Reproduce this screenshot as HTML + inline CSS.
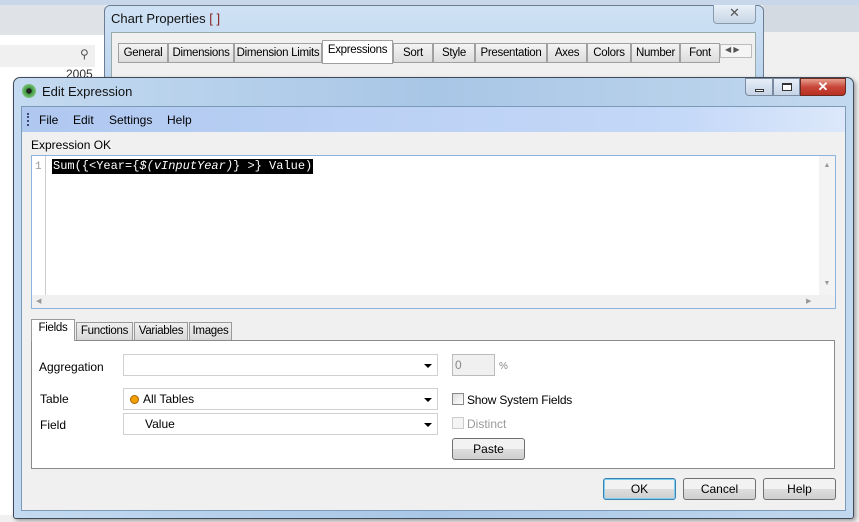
<!DOCTYPE html>
<html><head><style>
*{box-sizing:border-box;margin:0;padding:0}
body{width:859px;height:522px;overflow:hidden;position:relative;background:#f0f0f0;font-family:"Liberation Sans",sans-serif;font-size:12px;color:#000}
.a{position:absolute}
.tab{position:absolute;top:43px;height:20px;border:1px solid #a0a0a0;background:linear-gradient(#f4f4f4,#dcdcdc);font-size:11.5px;letter-spacing:-0.3px;padding:3px 0;text-align:center;white-space:nowrap;overflow:hidden}
.combo{position:absolute;left:123px;width:315px;height:22px;border:1px solid #d0d0d0;background:#fff;padding:3px 6px}
.combo:after{content:"";position:absolute;right:5px;top:9px;border-left:4px solid transparent;border-right:4px solid transparent;border-top:4px solid #000}
.btn{position:absolute;top:478px;width:73px;height:22px;border:1px solid #707070;border-radius:3px;background:linear-gradient(#f2f2f2 50%,#dddddd 50%,#cfcfcf);text-align:center;line-height:20px}
.itab{position:absolute;top:322px;height:19px;border:1px solid #9a9a9a;background:linear-gradient(#f0f0f0,#d8d8d8);padding:2px 0;text-align:center;font-size:11.5px;letter-spacing:-0.3px}
</style></head><body>
<div class="a" style="left:0;top:0;width:859px;height:5px;background:#c8d8ea"></div>
<div class="a" style="left:0;top:5px;width:105px;height:30px;background:#dfe3e8"></div>
<div class="a" style="left:0;top:35px;width:105px;height:480px;background:#fff"></div>
<div class="a" style="left:0;top:45px;width:95px;height:22px;background:#f0f0f0"></div>
<div class="a" style="left:80px;top:47px;font-size:12px;color:#555">⚲</div>
<div class="a" style="left:66px;top:67px;color:#333">2005</div>
<div class="a" style="left:763px;top:5px;width:96px;height:27px;background:#d3dae2"></div>
<div class="a" style="left:763px;top:32px;width:96px;height:490px;background:#f0f0f0"></div>
<div class="a" style="left:104px;top:5px;width:660px;height:80px;border:1px solid #6e7e90;border-radius:6px 6px 0 0;background:linear-gradient(#cfe2f5,#bcd4ee)"></div>
<div class="a" style="left:111px;top:11px;font-size:13px;color:#111">Chart Properties <span style="color:#8a1a1a">[ ]</span></div>
<div class="a" style="left:713px;top:5px;width:43px;height:19px;border:1px solid #8a9aae;border-top:none;border-radius:0 0 4px 4px;background:linear-gradient(#e8f0f8,#c8d6e6);text-align:center;color:#555;font-size:13px">✕</div>
<div class="a" style="left:111px;top:32px;width:645px;height:50px;background:#f0f0f0;border:1px solid #9aa"></div>
<div class="tab" style="left:118px;width:50px">General</div>
<div class="tab" style="left:168px;width:66px">Dimensions</div>
<div class="tab" style="left:234px;width:88px">Dimension Limits</div>
<div class="tab" style="left:322px;top:40px;height:24px;width:71px;background:#fff">Expressions</div>
<div class="tab" style="left:393px;width:40px">Sort</div>
<div class="tab" style="left:433px;width:42px">Style</div>
<div class="tab" style="left:475px;width:72px">Presentation</div>
<div class="tab" style="left:547px;width:40px">Axes</div>
<div class="tab" style="left:587px;width:44px">Colors</div>
<div class="tab" style="left:631px;width:49px">Number</div>
<div class="tab" style="left:680px;width:40px">Font</div>
<div class="a" style="left:720px;top:44px;width:32px;height:14px;border:1px solid #bbb;background:#f5f5f5;font-size:8px;color:#555;padding-left:4px">◀ ▶</div>
<div class="a" style="left:13px;top:77px;width:841px;height:442px;border:1px solid #404a58;border-radius:7px 7px 3px 3px;background:linear-gradient(90deg,#c4daf0,#a8c6e6 50%,#c2d8ee);box-shadow:2px 2px 4px rgba(0,0,0,.35)"></div>
<div class="a" style="left:22px;top:84px;width:14px;height:14px;border-radius:50%;background:radial-gradient(circle,#222 25%,#3c9a3c 30%,#7cc07c 70%,#999 75%)"></div>
<div class="a" style="left:42px;top:84px;font-size:13px;color:#111">Edit Expression</div>
<div class="a" style="left:745px;top:78px;width:28px;height:18px;border:1px solid #7a8aa0;border-radius:0 0 0 4px;background:linear-gradient(#e6eef8,#c6d4e6)"><div class="a" style="left:9px;top:10px;width:9px;height:3px;border:1px solid #333;background:#fff"></div></div>
<div class="a" style="left:773px;top:78px;width:27px;height:18px;border:1px solid #7a8aa0;background:linear-gradient(#e6eef8,#c6d4e6)"><div class="a" style="left:8px;top:4px;width:10px;height:8px;border:1px solid #333;border-top-width:2px;background:#fff"></div></div>
<div class="a" style="left:800px;top:78px;width:46px;height:18px;border:1px solid #6a2a20;border-radius:0 0 4px 0;background:linear-gradient(#e8a090,#c8463a 50%,#b83020);color:#fff;text-align:center;font-weight:bold;font-size:13px;line-height:16px">✕</div>
<div class="a" style="left:21px;top:106px;width:825px;height:405px;background:#f0f0f0;border:1px solid #7a9ab8"></div>
<div class="a" style="left:22px;top:107px;width:823px;height:25px;background:linear-gradient(90deg,#b0c8f0,#c4d8f8 80%,#dce8fa)"></div>
<div class="a" style="left:27px;top:113px;width:2px;height:13px;border-left:2px dotted #3a4a70"></div>
<div class="a" style="left:39px;top:113px">File</div>
<div class="a" style="left:73px;top:113px">Edit</div>
<div class="a" style="left:109px;top:113px">Settings</div>
<div class="a" style="left:167px;top:113px">Help</div>
<div class="a" style="left:31px;top:138px">Expression OK</div>
<div class="a" style="left:31px;top:155px;width:805px;height:154px;border:1px solid #8cb4dc;background:#fff"></div>
<div class="a" style="left:32px;top:156px;width:14px;height:139px;background:#fff;border-right:1px solid #ccc"></div>
<div class="a" style="left:35px;top:161px;font-size:11px;color:#999;font-family:'Liberation Mono',monospace">1</div>
<div class="a" style="left:52px;top:159px;height:15px;background:#000;color:#fff;font-family:'Liberation Mono',monospace;font-size:12px;line-height:15px;padding:0 1px;white-space:pre">Sum({&lt;Year={<i>$(vInputYear)</i>} &gt;} Value)</div>
<div class="a" style="left:819px;top:156px;width:16px;height:139px;background:#f3f3f3;color:#999;font-size:7px;text-align:center;padding-top:6px">▲<div style="position:absolute;top:124px;width:16px">▼</div></div>
<div class="a" style="left:32px;top:295px;width:803px;height:13px;background:#f0f0f0;color:#999;font-size:7px;padding:2px 4px">◀<span style="position:absolute;left:774px">▶</span></div>
<div class="itab" style="left:31px;top:319px;height:22px;width:44px;background:#fff;border-bottom:none;z-index:2">Fields</div>
<div class="itab" style="left:76px;width:57px">Functions</div>
<div class="itab" style="left:134px;width:54px">Variables</div>
<div class="itab" style="left:189px;width:43px">Images</div>
<div class="a" style="left:31px;top:340px;width:804px;height:129px;border:1px solid #8a8a8a;background:#fff"></div>
<div class="a" style="left:39px;top:360px">Aggregation</div>
<div class="a" style="left:40px;top:392px">Table</div>
<div class="a" style="left:40px;top:418px">Field</div>
<div class="combo" style="top:354px"></div>
<div class="combo" style="top:388px"><span style="display:inline-block;width:9px;height:9px;border-radius:50%;background:#f0a000;border:1px solid #b06000;margin-right:4px;vertical-align:-1px"></span>All Tables</div>
<div class="combo" style="top:413px;padding-left:21px">Value</div>
<div class="a" style="left:452px;top:354px;width:43px;height:22px;border:1px solid #bbb;background:#f0f0f0;color:#888;padding:3px 2px">0</div>
<div class="a" style="left:499px;top:361px;font-size:10px;color:#888">%</div>
<div class="a" style="left:452px;top:393px;width:12px;height:12px;border:1px solid #888;background:linear-gradient(135deg,#ddd,#fff)"></div>
<div class="a" style="left:467px;top:393px;letter-spacing:-0.2px">Show System Fields</div>
<div class="a" style="left:452px;top:417px;width:12px;height:12px;border:1px solid #ccc;background:#f4f4f4"></div>
<div class="a" style="left:467px;top:417px;color:#999">Distinct</div>
<div class="btn" style="left:452px;top:438px;width:73px;height:22px">Paste</div>
<div class="btn" style="left:603px;border-color:#3c7fb1;box-shadow:inset 0 0 0 1px #7fd0f0">OK</div>
<div class="btn" style="left:683px">Cancel</div>
<div class="btn" style="left:763px">Help</div>
</body></html>
